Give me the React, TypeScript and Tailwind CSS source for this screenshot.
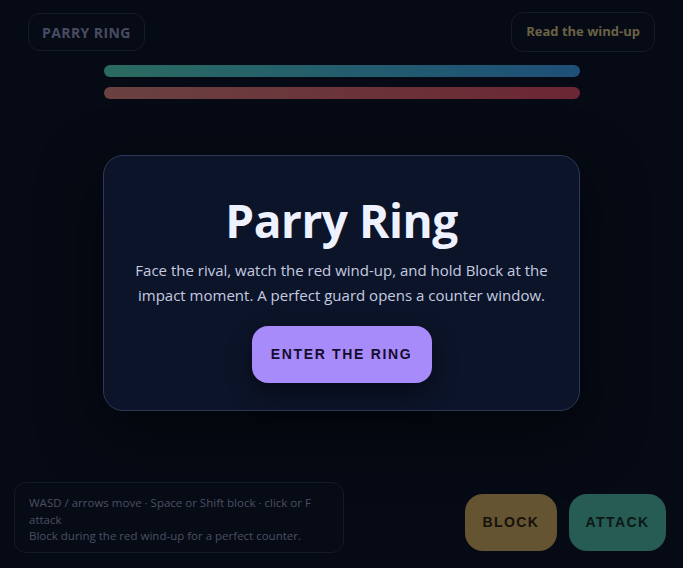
import React from "react";

const sans = { fontFamily: '"Open Sans", "Noto Sans", sans-serif' };

const App: React.FC = () => {
  return (
    <div className="w-full h-[568px] bg-[#060a14] flex flex-col overflow-hidden font-['Open_Sans',_'Noto_Sans',_sans-serif]">
      {/* Top HUD */}
      <div className="flex items-start justify-between px-[28px] pt-[13px]">
        <div className="h-[38px] px-[13px] flex items-center rounded-[12px] border border-[#161b2a] bg-[#070b16]">
          <span className="text-[14px] font-bold tracking-[0.03em] text-[#474c62]">PARRY RING</span>
        </div>
        <div className="h-[40px] -mt-[1px] px-[14px] flex items-center rounded-[12px] border border-[#161b2a] bg-[#070b16]">
          <span className="text-[13px] font-bold text-[#6a6245]">Read the wind-up</span>
        </div>
      </div>

      {/* Health bars */}
      <div className="w-[476px] mx-auto mt-[13px] flex flex-col gap-[10px]">
        <div className="h-[12px] rounded-full bg-gradient-to-r from-[#2b6a60] to-[#1e4f78]" />
        <div className="h-[12px] rounded-full bg-gradient-to-r from-[#6a4140] to-[#6b2634]" />
      </div>

      {/* Intro card */}
      <div className="flex-1 flex justify-center">
        <div
          className="w-[477px] h-[256px] mt-[56px] rounded-[20px] border border-[#2f3858] bg-[#0c1429] shadow-[0_20px_60px_rgba(0,0,0,0.55)] flex flex-col items-center pt-[35px]"
          style={sans}
        >
          <h1 className="text-[46px] leading-[58px] font-bold text-[#eef2ff] tracking-[-0.01em]">Parry Ring</h1>
          <p className="mt-[9px] text-[15px] leading-[25px] text-[#c5cbe0] text-center w-[430px]">
            Face the rival, watch the red wind-up, and hold Block at the impact moment. A perfect guard opens a counter window.
          </p>
          <button className="mt-[18px] w-[180px] h-[57px] rounded-[16px] bg-[#a78bfa] shadow-[0_10px_25px_rgba(0,0,0,0.45)] font-['Liberation_Sans',_Arial,_sans-serif] text-[14px] font-bold tracking-[0.12em] text-[#140d2c]">
            ENTER THE RING
          </button>
        </div>
      </div>

      {/* Bottom controls */}
      <div className="flex items-end justify-between pl-[14px] pr-[17px] pb-[15px]">
        <div className="w-[330px] h-[71px] rounded-[12px] border border-[#151a28] bg-[#070b16] px-[14px] pt-[12px] text-[11.5px] leading-[16.5px] text-[#4a5064]">
          WASD / arrows move · Space or Shift block · click or F attack
          <br />
          Block during the red wind-up for a perfect counter.
        </div>
        <div className="flex gap-[12px] mb-[2px]">
          <button className="w-[92px] h-[57px] rounded-[18px] bg-[#655431] font-['Liberation_Sans',_Arial,_sans-serif] text-[14px] font-bold tracking-[0.1em] text-[#15110b]">
            BLOCK
          </button>
          <button className="w-[97px] h-[57px] rounded-[18px] bg-[#265c54] font-['Liberation_Sans',_Arial,_sans-serif] text-[14px] font-bold tracking-[0.1em] text-[#0b1816]">
            ATTACK
          </button>
        </div>
      </div>
    </div>
  );
};

export default App;
